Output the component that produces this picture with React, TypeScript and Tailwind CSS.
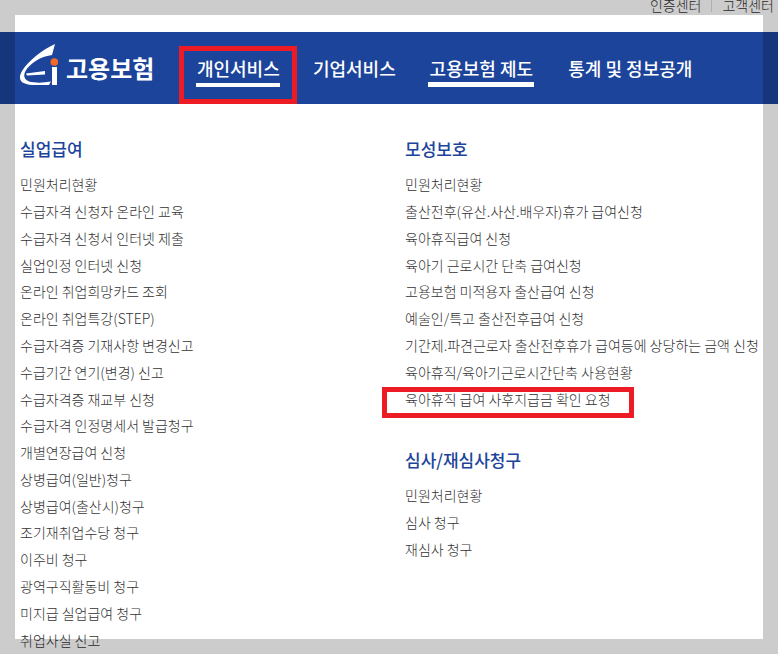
import clsx from "clsx";

type MainItem = {
  label: string;
  width: string;
  underline?: string;
  marked?: boolean;
};

const mainItems: MainItem[] = [
  { label: "개인서비스", width: "min-w-[84px]", underline: "h-1", marked: true },
  { label: "기업서비스", width: "min-w-[84px]" },
  { label: "고용보험 제도", width: "min-w-[106px]", underline: "h-[5px]" },
  { label: "통계 및 정보공개", width: "min-w-[128px]" },
];

const benefitLinks = [
  "민원처리현황",
  "수급자격 신청자 온라인 교육",
  "수급자격 신청서 인터넷 제출",
  "실업인정 인터넷 신청",
  "온라인 취업희망카드 조회",
  "온라인 취업특강(STEP)",
  "수급자격증 기재사항 변경신고",
  "수급기간 연기(변경) 신고",
  "수급자격증 재교부 신청",
  "수급자격 인정명세서 발급청구",
  "개별연장급여 신청",
  "상병급여(일반)청구",
  "상병급여(출산시)청구",
  "조기재취업수당 청구",
  "이주비 청구",
  "광역구직활동비 청구",
  "미지급 실업급여 청구",
  "취업사실 신고",
];

const maternityLinks = [
  "민원처리현황",
  "출산전후(유산.사산.배우자)휴가 급여신청",
  "육아휴직급여 신청",
  "육아기 근로시간 단축 급여신청",
  "고용보험 미적용자 출산급여 신청",
  "예술인/특고 출산전후급여 신청",
  "기간제.파견근로자 출산전후휴가 급여등에 상당하는 금액 신청",
  "육아휴직/육아기근로시간단축 사용현황",
  "육아휴직 급여 사후지급금 확인 요청",
];

const reviewLinks = ["민원처리현황", "심사 청구", "재심사 청구"];

function Logo() {
  return (
    <a href="#" className="flex shrink-0 items-center gap-2 text-white">
      <svg width="38" height="48" viewBox="0 0 38 48" aria-hidden="true">
        <path
          d="M35 0C22 6 8 17 2 27C-3 36 1 41 16 41H29L31 37.5C23 39 15 39 9 37.5C2 35 3 28 10 21.5C16 16 22 12.5 32 11Z"
          fill="#fff"
        />
        <path d="M6 29.5L25 27V30.5L7 31.5Z" fill="#fff" />
        <circle cx="34.3" cy="18" r="3.8" fill="#f36b2a" />
        <path d="M32 23H37V41H32Z" fill="#fff" />
      </svg>
      <span className="text-2xl font-bold whitespace-nowrap">고용보험</span>
    </a>
  );
}

function MenuGroup({
  title,
  links,
  height,
  marked,
}: {
  title: string;
  links: string[];
  height: string;
  marked?: string;
}) {
  return (
    <section>
      <h2 className="mb-[9px] text-[17px] leading-[26px] font-medium text-[#1c449b]">
        {title}
      </h2>
      <ul className={clsx("grid auto-rows-fr text-sm font-light text-[#333]", height)}>
        {links.map((link) => (
          <li key={link} className="relative flex items-center whitespace-nowrap">
            <a href="#">{link}</a>
            {link === marked && (
              <span className="absolute top-0.5 -left-[23px] h-[31px] w-[252px] border-5 border-[#ed1c24]" />
            )}
          </li>
        ))}
      </ul>
    </section>
  );
}

export default function App() {
  return (
    <div className="relative h-screen overflow-hidden bg-white font-['Noto_Sans_CJK_KR',sans-serif]">
      <div className="flex h-8 items-start justify-end pr-1 text-sm leading-[10px] font-light text-[#333]">
        <a href="#">인증센터</a>
        <span className="mx-[10px] h-3 w-px bg-[#ddd]" />
        <a href="#">고객센터</a>
      </div>

      <header className="flex h-[72px] items-center bg-[#1c449b] pl-5">
        <Logo />
        <nav className="ml-[42px]">
          <ul className="flex gap-8">
            {mainItems.map((item) => (
              <li key={item.label} className={clsx("relative", item.width)}>
                <button
                  type="button"
                  className="block w-full text-center text-lg leading-9 font-medium whitespace-nowrap text-white"
                >
                  {item.label}
                </button>
                {item.underline && (
                  <span
                    className={clsx(
                      "absolute inset-x-0 -bottom-px bg-white",
                      item.underline,
                    )}
                  />
                )}
                {item.marked && (
                  <span className="absolute -inset-x-[17px] -top-1 -bottom-[18px] border-5 border-[#ed1c24]" />
                )}
              </li>
            ))}
          </ul>
        </nav>
      </header>

      <main className="grid grid-cols-2 gap-3 pt-8 pl-5">
        <MenuGroup title="실업급여" links={benefitLinks} height="h-[482px]" />
        <div className="flex flex-col gap-[35px]">
          <MenuGroup
            title="모성보호"
            links={maternityLinks}
            height="h-[241px]"
            marked="육아휴직 급여 사후지급금 확인 요청"
          />
          <MenuGroup title="심사/재심사청구" links={reviewLinks} height="h-20" />
        </div>
      </main>

      <div className="pointer-events-none absolute inset-0 border-15 border-black/20" />
    </div>
  );
}
